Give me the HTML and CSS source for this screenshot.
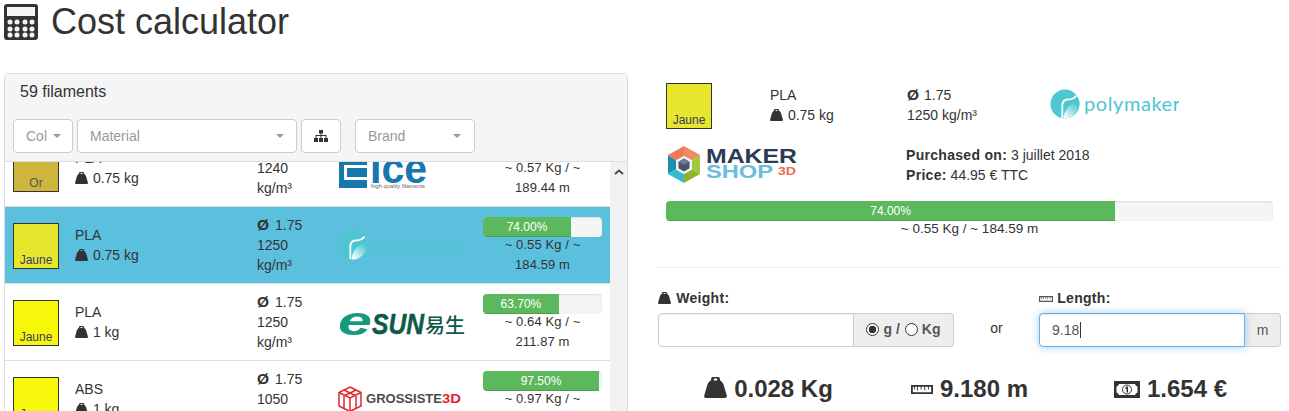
FILE: index.html
```html
<!DOCTYPE html>
<html lang="en">
<head>
<meta charset="utf-8">
<title>Cost calculator</title>
<link rel="stylesheet" href="styles.css">
</head>
<body>
<svg class="sprite" aria-hidden="true">
  <defs>
    <linearGradient id="polyFade" x1="0.1" y1="1" x2="0.8" y2="0.1">
      <stop offset="0" stop-color="#ffffff"/>
      <stop offset="1" stop-color="#4cc6d1"/>
    </linearGradient>
  </defs>
  <symbol id="kettle" viewBox="0 0 100 92">
    <path fill-rule="evenodd" d="M38 0H62C66 0 68 3 69 7L71 16C80 20 84 28 87 38L99 80C101 88 98 92 92 92H8C2 92 -1 88 1 80L13 38C16 28 20 20 29 16L31 7C32 3 34 0 38 0ZM43 7L42 15H58L57 7Z"/>
  </symbol>
  <symbol id="ruler" viewBox="0 0 24 12">
    <path fill-rule="evenodd" d="M0 1H24V11H0ZM2 3V9H22V3H19.500V6H18.500V3H15.500V7H14.500V3H11.500V6H10.500V3H7.500V7H6.500V3H4.500V6H3.500V3Z"/>
  </symbol>
  <symbol id="polymaker" viewBox="0 0 128 60">
    <circle cx="15" cy="30" r="14.500" fill="#4cc6d1"/>
    <path d="M13.500 44.400C14 38 17 33 22 30C25 28 28 27 29.400 28C29.800 34 26 41 19 44C17 44.600 15 44.700 13.500 44.400Z" fill="url(#polyFade)"/>
    <path d="M12.300 44V32C12.300 27.500 15 25.500 18 25.500C21 25.500 24 25 26.500 21.500" fill="none" stroke="#fff" stroke-width="1.800"/>
    <text x="34" y="37" class="poly-text" textLength="96" lengthAdjust="spacing">polymaker</text>
  </symbol>
</svg>

<header class="page-head">
  <svg class="calc-icon" viewBox="0 0 34 36" aria-hidden="true">
    <rect width="34" height="36" rx="3" fill="#333"/>
    <rect x="3" y="3" width="28" height="9" fill="#f4f4f4"/>
    <g fill="#f4f4f4">
      <circle cx="6" cy="18" r="2.500"/><circle cx="13" cy="18" r="2.500"/><circle cx="21" cy="18" r="2.500"/><circle cx="28" cy="18" r="2.500"/>
      <circle cx="6" cy="25" r="2.500"/><circle cx="13" cy="25" r="2.500"/><circle cx="21" cy="25" r="2.500"/><circle cx="28" cy="25" r="2.500"/>
      <circle cx="6" cy="31" r="2.500"/><circle cx="13" cy="31" r="2.500"/><circle cx="21" cy="31" r="2.500"/><circle cx="28" cy="31" r="2.500"/>
    </g>
  </svg>
  <h1 class="page-title">Cost calculator</h1>
</header>

<main class="layout">
  <section class="panel">
    <div class="panel-head">
      <div class="panel-title">59 filaments</div>
      <div class="filters">
        <div class="select select-col"><span class="select-text">Col</span><i class="caret"></i></div>
        <div class="select select-material"><span class="select-text">Material</span><i class="caret"></i></div>
        <button class="icon-btn" type="button" aria-label="Group">
          <svg viewBox="0 0 14 12" class="sitemap" aria-hidden="true"><path d="M5 0H9V3.500H7.500V5H12.500V8H14V12H10V8H11.500V6H7.500V8H9V12H5V8H6.500V6H2.500V8H4V12H0V8H1.500V5H6.500V3.500H5Z"/></svg>
        </button>
        <div class="select select-brand"><span class="select-text">Brand</span><i class="caret"></i></div>
      </div>
    </div>
    <div class="list-wrap">
      <div class="list">
        <div class="rows">
          <article class="row">
            <div class="swatch swatch-or"><span>Or</span></div>
            <div class="info"><div>PLA</div><div><svg class="kettle"><use href="#kettle"/></svg> 0.75 kg</div></div>
            <div class="spec"><div><b class="dia">Ø</b> 1.75</div><div>1240</div><div>kg/m³</div></div>
            <svg class="logo" viewBox="0 0 128 60" aria-hidden="true">
              <path fill-rule="evenodd" d="M1 10H29V50H1ZM6 27V42H29V39H9V30H29V27Z" fill="#1678ae"/>
              <text x="32" y="44.500" class="ice-text" textLength="57" lengthAdjust="spacingAndGlyphs">Ice</text>
              <text x="33" y="49.500" class="ice-sub" textLength="54" lengthAdjust="spacingAndGlyphs">high quality filaments</text>
            </svg>
            <div class="stock">
              <div class="progress"><div class="bar bar-76"><span>76.00%</span></div></div>
              <div class="stock-text">~ 0.57 Kg / ~ 189.44 m</div>
            </div>
          </article>
          <article class="row row-active">
            <div class="swatch swatch-pale"><span>Jaune</span></div>
            <div class="info"><div>PLA</div><div><svg class="kettle"><use href="#kettle"/></svg> 0.75 kg</div></div>
            <div class="spec"><div><b class="dia">Ø</b> 1.75</div><div>1250</div><div>kg/m³</div></div>
            <svg class="logo" aria-hidden="true"><use href="#polymaker"/></svg>
            <div class="stock">
              <div class="progress"><div class="bar bar-74"><span>74.00%</span></div></div>
              <div class="stock-text">~ 0.55 Kg / ~ 184.59 m</div>
            </div>
          </article>
          <article class="row">
            <div class="swatch swatch-yellow"><span>Jaune</span></div>
            <div class="info"><div>PLA</div><div><svg class="kettle"><use href="#kettle"/></svg> 1 kg</div></div>
            <div class="spec"><div><b class="dia">Ø</b> 1.75</div><div>1250</div><div>kg/m³</div></div>
            <svg class="logo" viewBox="0 0 128 60" aria-hidden="true">
              <text x="0" y="42.500" class="esun-e" textLength="34" lengthAdjust="spacingAndGlyphs">e</text>
              <text x="34" y="42" class="esun-text" textLength="52" lengthAdjust="spacingAndGlyphs">SUN</text>
              <text x="87" y="41" class="esun-cjk" textLength="40" lengthAdjust="spacingAndGlyphs">易生</text>
            </svg>
            <div class="stock">
              <div class="progress"><div class="bar bar-63"><span>63.70%</span></div></div>
              <div class="stock-text">~ 0.64 Kg / ~ 211.87 m</div>
            </div>
          </article>
          <article class="row">
            <div class="swatch swatch-yellow"><span>Jaune</span></div>
            <div class="info"><div>ABS</div><div><svg class="kettle"><use href="#kettle"/></svg> 1 kg</div></div>
            <div class="spec"><div><b class="dia">Ø</b> 1.75</div><div>1050</div><div>kg/m³</div></div>
            <svg class="logo" viewBox="0 0 128 60" aria-hidden="true">
              <g fill="none" stroke="#e3252b" stroke-width="1.500">
                <path d="M12 18L23 23.500V37L12 42.500L1 37V23.500Z"/>
                <path d="M1 23.500L12 29L23 23.500M12 29V42.500M6 21L17 26.500M18 21L7 26.500"/>
                <path d="M6 27V39M18 27V39"/>
              </g>
              <text x="28" y="34" class="gross-text" textLength="76" lengthAdjust="spacingAndGlyphs">GROSSISTE</text>
              <text x="104" y="34" class="gross-3d" textLength="19" lengthAdjust="spacingAndGlyphs">3D</text>
            </svg>
            <div class="stock">
              <div class="progress"><div class="bar bar-97"><span>97.50%</span></div></div>
              <div class="stock-text">~ 0.97 Kg / ~ 324.33 m</div>
            </div>
          </article>
        </div>
      </div>
      <div class="scrollbar"><svg class="scroll-up" viewBox="0 0 10 6" aria-hidden="true"><path d="M1 5L5 1.500L9 5" fill="none" stroke="#505050" stroke-width="2"/></svg></div>
    </div>
  </section>

  <section class="detail">
    <div class="detail-grid">
      <div class="swatch swatch-pale swatch-detail"><span>Jaune</span></div>
      <div class="info-detail"><div>PLA</div><div><svg class="kettle"><use href="#kettle"/></svg> 0.75 kg</div></div>
      <div class="info-detail"><div><b class="dia">Ø</b> 1.75</div><div>1250 kg/m³</div></div>
      <svg class="logo-detail" aria-hidden="true"><use href="#polymaker"/></svg>
    </div>
    <div class="purchase">
      <svg class="logo-shop" viewBox="0 0 130 40" aria-hidden="true">
        <path d="M17 1L17 11L9 15.500L1 10Z" fill="#ee7b55"/>
        <path d="M17 1L33 10L25 15.500L17 11Z" fill="#f08a63"/>
        <path d="M1 10L9 15.500V24.500L1 29Z" fill="#1f8fb0"/>
        <path d="M1 29L9 24.500L17 29V38Z" fill="#38b9d0"/>
        <path d="M33 29L25 24.500L17 29V38Z" fill="#8ab52c"/>
        <path d="M33 10L25 15.500V24.500L33 29Z" fill="#a3c840"/>
        <path d="M17 11L25 15.500V24.500L17 29L9 24.500V15.500Z" fill="#eef1f3"/>
        <path d="M17 13.500L22.500 16.700V23.300L17 26.500L11.500 23.300V16.700Z" fill="#47566f"/>
        <path d="M17 13.500L22.500 16.700L17 19.800L11.500 16.700Z" fill="#6d7b93"/>
        <text x="39" y="18" class="maker-text" textLength="91" lengthAdjust="spacingAndGlyphs">MAKER</text>
        <text x="39" y="33" class="shop-text" textLength="67" lengthAdjust="spacingAndGlyphs">SHOP</text>
        <text x="111" y="30" class="shop-3d" textLength="18" lengthAdjust="spacingAndGlyphs">3D</text>
      </svg>
      <div class="purchase-text">
        <div><b class="strong">Purchased on:</b> 3 juillet 2018</div>
        <div><b class="strong">Price:</b> 44.95 € TTC</div>
      </div>
    </div>
    <div class="progress progress-wide"><div class="bar bar-74"><span>74.00%</span></div></div>
    <div class="wide-note">~ 0.55 Kg / ~ 184.59 m</div>
    <hr class="rule">
    <div class="form-grid">
      <div class="field">
        <label class="field-label" for="weight"><svg class="kettle"><use href="#kettle"/></svg> Weight:</label>
        <div class="input-group">
          <input id="weight" class="input" type="text">
          <div class="addon addon-units">
            <input class="radio" type="radio" name="unit" checked aria-label="g"><span>g /</span><input class="radio" type="radio" name="unit" aria-label="Kg"><span>Kg</span>
          </div>
        </div>
      </div>
      <div class="or">or</div>
      <div class="field">
        <label class="field-label" for="length"><svg class="ruler-small"><use href="#ruler"/></svg> Length:</label>
        <div class="input-group">
          <div class="input-wrap"><input id="length" class="input input-focus" type="text" value="9.18"><i class="text-caret"></i></div>
          <div class="addon addon-m">m</div>
        </div>
      </div>
    </div>
    <div class="results">
      <div class="result"><svg class="kettle-big"><use href="#kettle"/></svg> 0.028 Kg</div>
      <div class="result"><svg class="ruler-big"><use href="#ruler"/></svg> 9.180 m</div>
      <div class="result">
        <svg class="money" viewBox="0 0 26 17" aria-hidden="true"><path fill-rule="evenodd" d="M0 0H26V17H0ZM5 3Q4.500 5 2.500 5.500V11.500Q4.500 12 5 14H21Q21.500 12 23.500 11.500V5.500Q21.500 5 21 3Z"/><circle cx="13" cy="8.500" r="4.500" fill="none" stroke="#333" stroke-width="1"/><path d="M12.500 5.500H14V11.500H12.500V7.500L11.300 7.900V6.800Z"/></svg>
        1.654 €
      </div>
    </div>
  </section>
</main>
</body>
</html>
```
FILE: styles.css
```css
* { box-sizing: border-box; }
html, body { margin: 0; height: 411px; overflow: hidden; }
body {
  font-family: "Liberation Sans", Arial, sans-serif;
  font-size: 14px;
  line-height: 20px;
  color: #333;
  background: #fff;
}
.sprite { display: block; width: 0; height: 0; overflow: hidden; }

.page-head { display: flex; align-items: center; gap: 13px; height: 44px; margin: 0 0 29px; padding-left: 4px; }
.calc-icon { width: 34px; height: 36px; flex: none; }
.page-title { margin: 0; font-size: 36px; font-weight: 400; line-height: 40px; }

.layout { display: grid; grid-template-columns: 624px 623px; column-gap: 30px; padding-left: 4px; height: 338px; overflow: hidden; }

.panel { border: 1px solid #ddd; border-radius: 4px; height: 400px; overflow: hidden; }
.panel-head { height: 88px; padding: 8px 8px 8px; background: #f5f5f5; border-bottom: 1px solid #ddd; }
.panel-title { font-size: 16px; line-height: 20px; padding-left: 7px; margin-bottom: 17px; }
.filters { display: flex; gap: 4px; }
.select {
  display: flex; align-items: center; justify-content: space-between;
  height: 34px; padding: 0 12px; background: #fff; border: 1px solid #ccc; border-radius: 4px; color: #999;
}
.select-col { width: 60px; padding-right: 11px; }
.select-col .select-text { width: 21px; overflow: hidden; }
.select-material { width: 220px; }
.select-brand { width: 120px; margin-left: 10px; padding-right: 13px; }
.caret { width: 0; height: 0; border-left: 4px solid transparent; border-right: 4px solid transparent; border-top: 4px solid #999; }
.icon-btn { display: flex; align-items: center; justify-content: center; width: 40px; height: 34px; padding: 0; background: #fff; border: 1px solid #ccc; border-radius: 4px; }
.sitemap { width: 14px; height: 12px; fill: #333; }

.list-wrap { display: flex; height: 311px; }
.list { width: 605px; overflow: hidden; }
.rows { margin-top: -32px; }
.scrollbar { flex: 1; background: #f1f1f1; padding: 7px 3px 0 3px; }
.scroll-up { display: block; width: 10px; height: 6px; margin: 0 auto; }

.row {
  display: grid;
  grid-template-columns: 62px 182px 81px 145px 119px;
  height: 77px; padding: 8px 0 0 8px;
  border-bottom: 1px solid #ddd;
}
.row-active { background: #5bc0de; }

.swatch { display: flex; align-items: flex-end; justify-content: center; width: 46px; height: 46px; margin-top: 8px; border: 1px solid #333; font-size: 12px; line-height: 16px; color: #3a3a62; }
.swatch-or { background: #cfb53b; color: #555; }
.swatch-pale { background: #e6e62c; }
.swatch-yellow { background: #f7f70b; }

.info { padding-top: 10px; }
.dia { font-size: 15.500px; line-height: 1; margin-right: 1px; }
.spec .dia { margin-right: 2px; }
.strong { letter-spacing: .3px; }
.kettle { width: 13px; height: 12px; fill: #333; vertical-align: -1px; margin-right: 1px; }
.spec { line-height: 20px; }
.logo { width: 128px; height: 60px; display: block; }
.poly-text { font-family: Lato, sans-serif; font-size: 20px; fill: #4cc6d1; font-weight: 400; }
.ice-text { font-family: "Liberation Sans", sans-serif; font-weight: 700; font-size: 42px; fill: #1678ae; }
.ice-sub { font-family: "Liberation Sans", sans-serif; font-size: 5.500px; fill: #666; }
.esun-e { font-family: "Liberation Sans", sans-serif; font-style: italic; font-weight: 700; font-size: 41px; fill: #169a7c; }
.esun-text { font-family: "Liberation Sans", sans-serif; font-weight: 700; font-style: italic; font-size: 30px; fill: #0d5a4a; stroke: #0d5a4a; stroke-width: .5px; }
.esun-cjk { font-family: "Noto Sans CJK SC", sans-serif; font-weight: 500; font-size: 20px; fill: #0d5a4a; }
.gross-text { font-family: "Liberation Sans", sans-serif; font-weight: 700; font-size: 12px; fill: #4b4b4b; }
.gross-3d { font-family: "Liberation Sans", sans-serif; font-weight: 700; font-size: 13px; fill: #e3252b; }

.stock { text-align: center; padding-top: 2px; }
.stock-text { margin-top: -2px; padding: 0 5px; font-size: 13px; letter-spacing: .1px; }
.progress { height: 20px; overflow: hidden; background: #f5f5f5; border-radius: 4px; box-shadow: inset 0 1px 2px rgba(0,0,0,.1); }
.bar { height: 100%; background: #5cb85c; color: #fff; font-size: 12px; line-height: 20px; text-align: center; box-shadow: inset 0 -1px 0 rgba(0,0,0,.15); }
.bar-76 { width: 76%; }
.bar-74 { width: 74%; }
.bar-63 { width: 63.7%; }
.bar-97 { width: 97.5%; }

.detail { padding-top: 10px; }
.detail-grid { display: grid; grid-template-columns: 104px 137px 142px 130px; padding-left: 8px; height: 46px; }
.swatch-detail { margin-top: 0; }
.info-detail { padding-top: 2px; }
.logo-detail { display: block; width: 130px; height: 60px; margin-top: -9px; }

.purchase { display: flex; padding-left: 8px; margin-top: 16px; height: 40px; }
.logo-shop { width: 130px; height: 40px; margin-left: 1px; flex: none; }
.purchase-text { margin-left: 109px; }
.maker-text { font-family: "Liberation Sans", sans-serif; font-weight: 700; font-size: 20px; fill: #2b3a55; }
.shop-text { font-family: "Liberation Sans", sans-serif; font-weight: 700; font-size: 19px; fill: #6bbcdc; }
.shop-3d { font-family: "Liberation Sans", sans-serif; font-weight: 700; font-size: 11px; fill: #ee6a4d; }

.progress-wide { width: 607px; margin: 16px 0 0 8px; }
.wide-note { width: 607px; margin: -2px 0 0 8px; text-align: center; font-size: 13.500px; }
.rule { margin: 28px 0 0; border: 0; border-top: 1px solid #eee; }

.form-grid { display: grid; grid-template-columns: 296px 85px 242px; margin-top: 20px; }
.field-label { display: block; font-weight: 700; margin-bottom: 5px; letter-spacing: .3px; }
.ruler-small { width: 14px; height: 8px; fill: #555; vertical-align: 0; }
.input-group { display: flex; height: 34px; }
.input { flex: 1; min-width: 0; width: 100%; height: 34px; padding: 6px 12px; font: 14px/20px "Liberation Sans", Arial, sans-serif; color: #555; background: #fff; border: 1px solid #ccc; border-radius: 4px 0 0 4px; outline: 0; box-shadow: inset 0 1px 1px rgba(0,0,0,.075); }
.input-wrap { position: relative; flex: 1; }
.input-focus { display: block; border-color: #66afe9; box-shadow: inset 0 1px 1px rgba(0,0,0,.075), 0 0 8px rgba(102,175,233,.6); }
.text-caret { position: absolute; left: 41px; top: 9px; width: 1px; height: 16px; background: #333; }
.addon { display: flex; align-items: center; justify-content: center; background: #eee; border: 1px solid #ccc; border-left: 0; border-radius: 0 4px 4px 0; color: #555; }
.addon-units { flex: none; width: 100px; font-weight: 700; gap: 0; padding-bottom: 2px; }
.addon-units span:first-of-type { margin: 0 5px 0 4px; }
.addon-units span:last-of-type { margin-left: 4px; }
.addon-m { flex: none; width: 36px; }
.radio { appearance: none; -webkit-appearance: none; width: 13px; height: 13px; margin: 0; border: 1px solid #333; border-radius: 50%; background: #fff; }
.radio:checked { background: radial-gradient(circle, #333 0 3.5px, #fff 4px); }
.or { padding-top: 30px; text-align: center; line-height: 20px; }

.results { display: grid; grid-template-columns: repeat(3, 1fr); margin: 29px 0 0; padding: 0 10px; }
.result { display: flex; align-items: center; justify-content: center; gap: 7px; font-size: 24px; font-weight: 700; line-height: 26px; }
.kettle-big { width: 23px; height: 21px; fill: #333; margin-bottom: 3px; }
.ruler-big { width: 22px; height: 11px; fill: #333; }
.money { width: 26px; height: 17px; fill: #333; }
```
